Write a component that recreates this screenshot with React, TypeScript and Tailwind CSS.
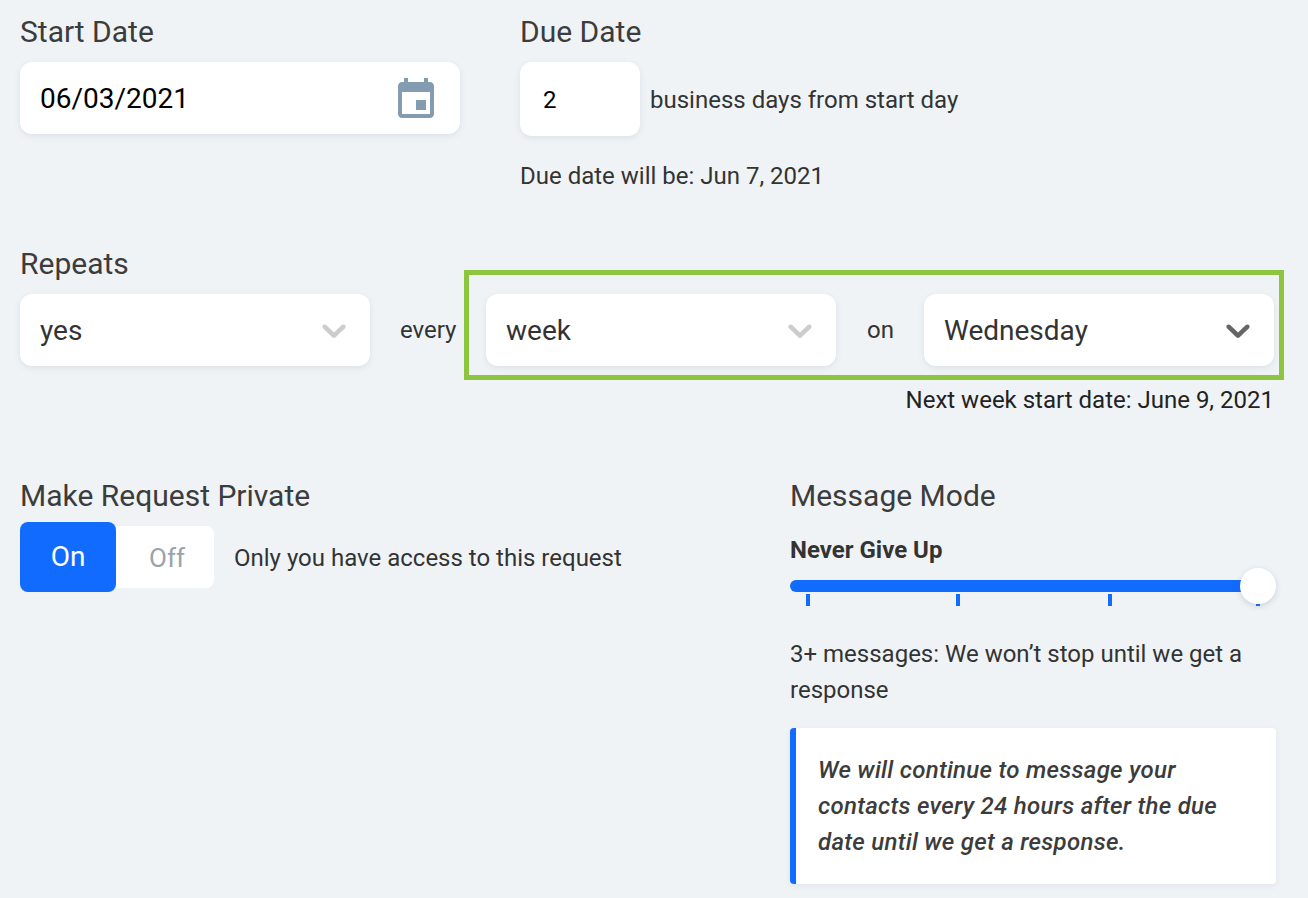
const BLUE = "#126bff";

function Chevron({ dark }: { dark?: boolean }) {
  return (
    <svg viewBox="0 0 20 20" className={`h-10 w-10 ${dark ? "fill-[#666666]" : "fill-[#cccccc]"}`}>
      <path d="M4.516 7.548c0.436-0.446 1.043-0.481 1.576 0l3.908 3.747 3.908-3.747c0.533-0.481 1.141-0.446 1.574 0 0.436 0.445 0.408 1.197 0 1.615-0.406 0.418-4.695 4.502-4.695 4.502-0.217 0.223-0.502 0.335-0.787 0.335s-0.57-0.112-0.789-0.335c0 0-4.287-4.084-4.695-4.502s-0.436-1.17 0-1.615z" />
    </svg>
  );
}

function Select({ value, dark }: { value: string; dark?: boolean }) {
  return (
    <div className="flex h-[72px] w-[350px] shrink-0 items-center justify-between rounded-xl bg-white pl-5 pr-4 shadow-[0_2px_6px_rgba(60,80,110,0.1)]">
      <span className="pt-[2px] text-[28px] leading-9 text-[#333333]">{value}</span>
      <Chevron dark={dark} />
    </div>
  );
}

function Label({ children }: { children: React.ReactNode }) {
  return <div className="h-9 text-[30px] leading-9 text-[#3c3c3c]">{children}</div>;
}

export default function App() {
  return (
    <div className="h-[898px] w-[1308px] overflow-hidden bg-[#eff3f6] pl-5 pt-[14px] font-['Roboto',sans-serif] text-2xl leading-9 text-[#333333]">
      <div className="flex h-[238px] gap-[60px]">
        <div className="w-[440px]">
          <Label>Start Date</Label>
          <div className="mt-3 flex h-[72px] items-center justify-between rounded-xl bg-white pl-5 pr-5 shadow-[0_2px_6px_rgba(60,80,110,0.1)]">
            <span className="pt-[2px] text-[28px] leading-9 text-black">06/03/2021</span>
            <svg viewBox="0 0 24 24" className="mt-1 h-12 w-12 fill-[#849cb2]">
              <path d="M17 12h-5v5h5v-5zM16 1v2H8V1H6v2H5c-1.11 0-1.99.9-1.99 2L3 19c0 1.1.89 2 2 2h14c1.1 0 2-.9 2-2V5c0-1.1-.9-2-2-2h-1V1h-2zm3 18H5V8h14v11z" />
            </svg>
          </div>
        </div>
        <div>
          <Label>Due Date</Label>
          <div className="mt-3 flex items-center">
            <div className="flex h-[74px] w-[120px] items-center rounded-xl bg-white pl-[23px] pt-[2px] text-black shadow-[0_2px_6px_rgba(60,80,110,0.1)]">2</div>
            <span className="ml-[10px] pt-[2px]">business days from start day</span>
          </div>
          <div className="mt-[22px]">Due date will be: Jun 7, 2021</div>
        </div>
      </div>

      <div className="relative z-10 -mb-[6px] h-6 text-[30px] leading-6 text-[#3c3c3c]">Repeats</div>
      <div className="flex h-[110px] items-start">
        <div className="pt-[24px]">
          <Select value="yes" />
        </div>
        <span className="ml-[30px] mt-[42px] w-[64px]">every</span>
        <div className="flex h-[110px] w-[820px] items-start border-[5px] border-[#8cc63f] pl-[17px] pt-[19px]">
          <Select value="week" />
          <span className="ml-[31px] mt-[18px] w-[57px]">on</span>
          <Select value="Wednesday" dark />
        </div>
      </div>
      <div className="mt-[2px] w-[1254px] text-right text-[#222222]">Next week start date: June 9, 2021</div>

      <div className="mt-[60px] flex">
        <div className="w-[770px]">
          <Label>Make Request Private</Label>
          <div className="mt-2 flex items-center">
            <div className="flex h-[70px] w-24 items-center justify-center rounded-lg bg-[#126bff] text-[28px] text-white">On</div>
            <div className="flex h-[62px] w-[98px] items-center justify-center rounded-r-lg bg-white pl-1 pt-[2px] text-[26px] text-[#99a3ab]">Off</div>
            <span className="ml-5 pt-[2px]">Only you have access to this request</span>
          </div>
        </div>
        <div className="w-[486px]">
          <Label>Message Mode</Label>
          <div className="mt-[18px] font-bold text-[#333333]">Never Give Up</div>
          <div className="relative mt-3 h-8">
            <div className="h-3 w-[468px] rounded-full" style={{ backgroundColor: BLUE }} />
            <div className="absolute left-[16px] top-[14px] h-3 w-1 bg-[#126bff]" />
            <div className="absolute left-[166px] top-[14px] h-3 w-1 bg-[#126bff]" />
            <div className="absolute left-[318px] top-[14px] h-3 w-1 bg-[#126bff]" />
            <div className="absolute left-[466px] top-[14px] h-3 w-1 bg-[#126bff]" />
            <div className="absolute left-[450px] top-[-12px] h-9 w-9 rounded-full bg-white shadow-[0_2px_6px_rgba(60,80,110,0.2)]" />
          </div>
          <div className="mt-[24px]">3+ messages: We won’t stop until we get a response</div>
          <div className="mt-5 h-[156px] rounded border-l-[6px] border-[#126bff] bg-white pl-[22px] pr-8 pt-6 font-medium italic tracking-[0.28px] text-[#3c3c3c] shadow-[0_2px_6px_rgba(60,80,110,0.08)]">
            We will continue to message your contacts every 24 hours after the due date until we get a response.
          </div>
        </div>
      </div>
    </div>
  );
}
